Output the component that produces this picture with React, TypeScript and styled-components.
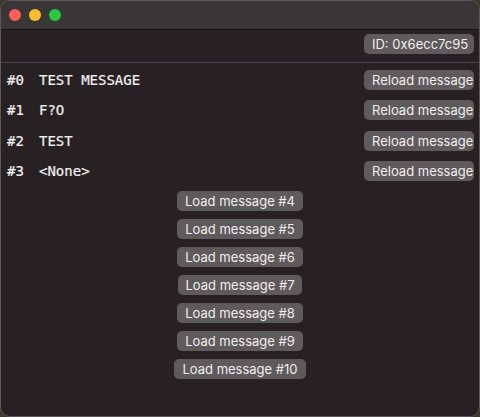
import React from 'react';
import styled, { createGlobalStyle } from 'styled-components';

const GlobalStyle = createGlobalStyle`
  html, body {
    margin: 0;
    padding: 0;
    background: #3a3a2e;
  }
  #root {
    width: 480px;
    height: 417px;
  }
`;

const Window = styled.div`
  box-sizing: border-box;
  width: 480px;
  height: 417px;
  border-radius: 10px;
  border: 1px solid #5c585a;
  background: #282124;
  overflow: hidden;
  display: flex;
  flex-direction: column;
`;

const TitleBar = styled.div`
  height: 28px;
  flex: none;
  background: #3a3638;
  border-bottom: 1px solid #121011;
  display: flex;
  align-items: center;
  gap: 8px;
  padding-left: 8px;
`;

const Light = styled.span<{ $color: string }>`
  width: 12px;
  height: 12px;
  border-radius: 50%;
  background: ${(p) => p.$color};
`;

const Header = styled.div`
  display: flex;
  justify-content: flex-end;
  padding: 4px 5px 8px 0;
  border-bottom: 1px solid #48424a;
`;

const Button = styled.button<{ $width?: number }>`
  box-sizing: border-box;
  height: 20px;
  ${(p) => (p.$width ? `width: ${p.$width}px;` : '')}
  padding: 0 8px;
  border: none;
  border-radius: 5px;
  background: #5f5a5c;
  color: #f0eeef;
  font-family: Inter, 'Liberation Sans', sans-serif;
  font-size: 13px;
  line-height: 20px;
  white-space: nowrap;
  cursor: pointer;
`;

const Messages = styled.div`
  display: flex;
  flex-direction: column;
  gap: 10.3px;
  padding: 7px 5px 0 6px;
`;

const Row = styled.div`
  display: flex;
  align-items: center;
  height: 20px;
`;

const MonoText = styled.span`
  font-family: 'DejaVu Sans Mono', 'Liberation Mono', monospace;
  font-size: 14px;
  color: #f2f0f1;
  -webkit-text-stroke: 0.2px #f2f0f1;
  white-space: pre;
`;

const Index = styled(MonoText)`
  width: 32px;
`;

const Body = styled(MonoText)`
  flex: 1;
`;

const LoadList = styled.div`
  display: flex;
  flex-direction: column;
  align-items: center;
  gap: 8px;
  padding-top: 10px;
`;

const messages = ['TEST MESSAGE', 'F?O', 'TEST', '<None>'];
const pending = [4, 5, 6, 7, 8, 9, 10];

export default function App() {
  return (
    <>
      <GlobalStyle />
      <Window>
        <TitleBar>
          <Light $color="#fe5f57" />
          <Light $color="#febc2e" />
          <Light $color="#28c840" />
        </TitleBar>
        <Header>
          <Button $width={110}>ID: 0x6ecc7c95</Button>
        </Header>
        <Messages>
          {messages.map((m, i) => (
            <Row key={i}>
              <Index>#{i}</Index>
              <Body>{m}</Body>
              <Button $width={110}>Reload message</Button>
            </Row>
          ))}
        </Messages>
        <LoadList>
          {pending.map((n) => (
            <Button key={n}>Load message #{n}</Button>
          ))}
        </LoadList>
      </Window>
    </>
  );
}
